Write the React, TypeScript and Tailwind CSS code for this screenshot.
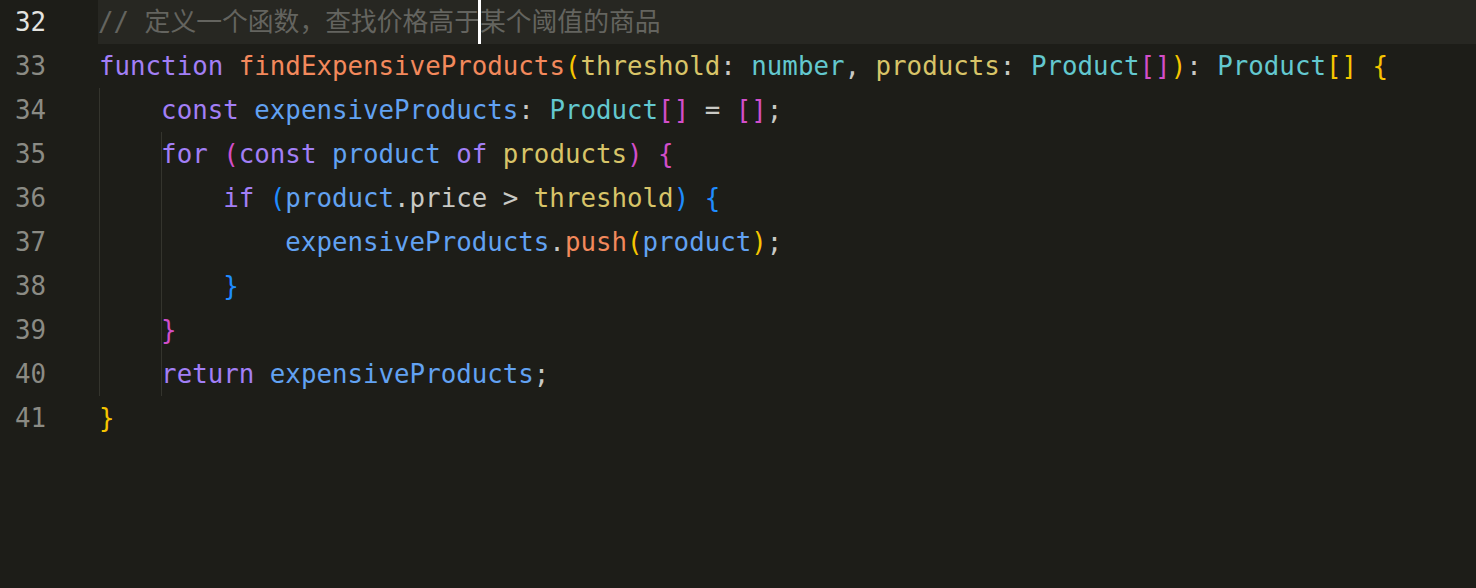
type Token = { t: string; c: string };

const kw = "text-[#a27ff6]";
const fn = "text-[#f3895c]";
const par = "text-[#d8c468]";
const typ = "text-[#63c8cf]";
const vr = "text-[#62a2f2]";
const pun = "text-[#c9c9c4]";
const yb = "text-[#f7c500]";
const mb = "text-[#d24ec9]";
const bb = "text-[#1f8cff]";

// guides: indent levels that show a vertical guide line
const lines: { n: number; indent: number; guides: number[]; tokens: Token[] }[] = [
  {
    n: 33,
    indent: 0,
    guides: [],
    tokens: [
      { t: "function ", c: kw },
      { t: "findExpensiveProducts", c: fn },
      { t: "(", c: yb },
      { t: "threshold", c: par },
      { t: ": ", c: pun },
      { t: "number", c: typ },
      { t: ", ", c: pun },
      { t: "products", c: par },
      { t: ": ", c: pun },
      { t: "Product", c: typ },
      { t: "[]", c: mb },
      { t: ")", c: yb },
      { t: ": ", c: pun },
      { t: "Product", c: typ },
      { t: "[]", c: yb },
      { t: " {", c: yb },
    ],
  },
  {
    n: 34,
    indent: 1,
    guides: [0],
    tokens: [
      { t: "const ", c: kw },
      { t: "expensiveProducts", c: vr },
      { t: ": ", c: pun },
      { t: "Product", c: typ },
      { t: "[]", c: mb },
      { t: " = ", c: pun },
      { t: "[]", c: mb },
      { t: ";", c: pun },
    ],
  },
  {
    n: 35,
    indent: 1,
    guides: [0, 1],
    tokens: [
      { t: "for ", c: kw },
      { t: "(", c: mb },
      { t: "const ", c: kw },
      { t: "product ", c: vr },
      { t: "of ", c: kw },
      { t: "products", c: par },
      { t: ")", c: mb },
      { t: " {", c: mb },
    ],
  },
  {
    n: 36,
    indent: 2,
    guides: [0, 1],
    tokens: [
      { t: "if ", c: kw },
      { t: "(", c: bb },
      { t: "product", c: vr },
      { t: ".price > ", c: pun },
      { t: "threshold", c: par },
      { t: ")", c: bb },
      { t: " {", c: bb },
    ],
  },
  {
    n: 37,
    indent: 3,
    guides: [0, 1],
    tokens: [
      { t: "expensiveProducts", c: vr },
      { t: ".", c: pun },
      { t: "push", c: fn },
      { t: "(", c: yb },
      { t: "product", c: vr },
      { t: ")", c: yb },
      { t: ";", c: pun },
    ],
  },
  { n: 38, indent: 2, guides: [0, 1], tokens: [{ t: "}", c: bb }] },
  { n: 39, indent: 1, guides: [0, 1], tokens: [{ t: "}", c: mb }] },
  {
    n: 40,
    indent: 1,
    guides: [0, 1],
    tokens: [
      { t: "return ", c: kw },
      { t: "expensiveProducts", c: vr },
      { t: ";", c: pun },
    ],
  },
  { n: 41, indent: 0, guides: [], tokens: [{ t: "}", c: yb }] },
];

function Indent({ count, guides }: { count: number; guides: number[] }) {
  return (
    <>
      {Array.from({ length: count }).map((_, i) => (
        <span
          key={i}
          className={
            guides.includes(i)
              ? "inline-block h-[44px] align-top w-[4ch] shadow-[inset_1px_0_0_#34342d]"
              : "inline-block h-[44px] align-top w-[4ch]"
          }
        />
      ))}
      {guides.includes(count) ? (
        <span className="inline-block w-[1px] -mr-[1px] h-[44px] align-top bg-[#34342d]" />
      ) : null}
    </>
  );
}

export default function App() {
  return (
    <div
      className="w-[1476px] h-[588px] bg-[#1d1d18] overflow-hidden text-[25.8px] leading-[44px] whitespace-pre"
      style={{ fontFamily: '"DejaVu Sans Mono", "Noto Sans CJK SC", monospace' }}
    >
      <div className="flex h-[44px]">
        <div className="w-[98px] shrink-0 pl-[15px] text-[#e4e4e0]">32</div>
        <div className="flex-1 bg-[#272722] text-[#64645f] flex items-center">
          <span>// </span>
          <span>定义一个函数，查找价格高于</span>
          <span className="inline-block w-[3px] -ml-[2px] -mr-[1px] h-[44px] bg-white" />
          <span>某个阈值的商品</span>
        </div>
      </div>
      {lines.map((line) => (
        <div key={line.n} className="flex h-[44px]">
          <div className="w-[98px] shrink-0 pl-[15px] text-[#8b8b84]">{line.n}</div>
          <div className="flex-1 pl-[1px]">
            <Indent count={line.indent} guides={line.guides} />
            {line.tokens.map((tok, i) => (
              <span key={i} className={tok.c}>
                {tok.t}
              </span>
            ))}
          </div>
        </div>
      ))}
    </div>
  );
}
